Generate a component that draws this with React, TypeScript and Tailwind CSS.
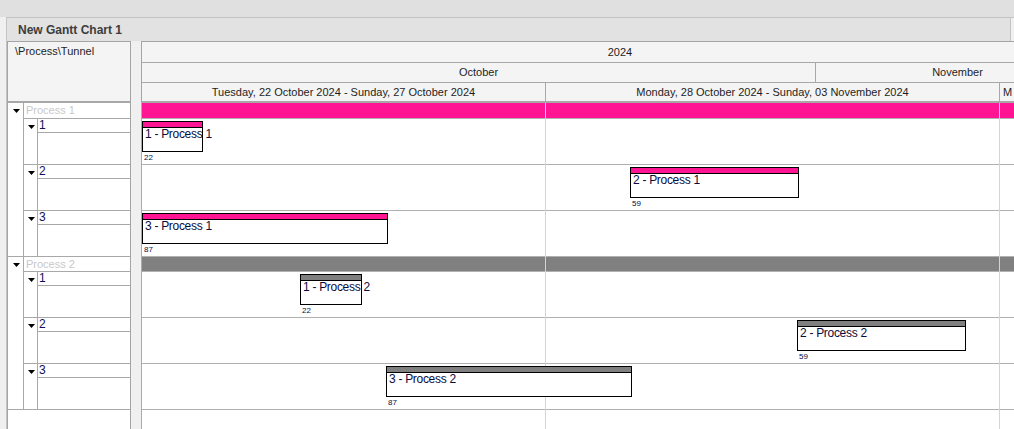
import React from 'react';

type Task = { id: string; label: string; left: number; width: number; num: number };
type Group = { name: string; fill: string; head: string; tasks: Task[] };

const groups: Group[] = [
  {
    name: 'Process 1',
    fill: 'bg-[#ff1493]',
    head: 'h-[16px]',
    tasks: [
      { id: '1', label: '1 - Process 1', left: 0, width: 61, num: 22 },
      { id: '2', label: '2 - Process 1', left: 488, width: 169, num: 59 },
      { id: '3', label: '3 - Process 1', left: 0, width: 246, num: 87 },
    ],
  },
  {
    name: 'Process 2',
    fill: 'bg-[#808080]',
    head: 'h-[15px]',
    tasks: [
      { id: '1', label: '1 - Process 2', left: 158, width: 62, num: 22 },
      { id: '2', label: '2 - Process 2', left: 655, width: 169, num: 59 },
      { id: '3', label: '3 - Process 2', left: 244, width: 246, num: 87 },
    ],
  },
];

const Caret = () => (
  <svg width="7" height="4" viewBox="0 0 7 4" className="block">
    <polygon points="0,0 7,0 3.5,4" fill="#000" />
  </svg>
);

const TreeGroup = ({ group }: { group: Group }) => (
  <div className="flex border-b border-[#a8a8a8]">
    <div className="w-[15px] shrink-0 pl-[5px] pt-[6px]">
      <Caret />
    </div>
    <div className="flex-1 border-l border-[#a8a8a8]">
      <div className={`${group.head} border-b border-[#a8a8a8] pl-[2px] text-[11px] leading-[14px] text-[#c8c8c8]`}>
        {group.name}
      </div>
      {group.tasks.map((t, i) => (
        <div
          key={t.id}
          className={
            i < group.tasks.length - 1
              ? 'flex h-[46px] border-b border-[#a8a8a8]'
              : 'flex h-[45px]'
          }
        >
          <div className="w-[13px] shrink-0 pl-[4px] pt-[6px]">
            <Caret />
          </div>
          <div className="flex-1 border-l border-[#a8a8a8]">
            <div className="h-[14px] border-b border-[#a8a8a8] pl-[1px] text-[12px] leading-[13px] text-[#10105a]">
              {t.id}
            </div>
          </div>
        </div>
      ))}
    </div>
  </div>
);

const ChartGroup = ({ group }: { group: Group }) => (
  <>
    <div className={`${group.head} border-b border-[#b0b0b0] ${group.fill}`} />
    {group.tasks.map((t) => (
      <div key={t.id} className="relative h-[46px] border-b border-[#b0b0b0]">
        <div className="absolute top-[2px] z-10" style={{ left: t.left, width: t.width }}>
          <div className="flex h-[31px] flex-col border border-black bg-white">
            <div className={`h-[6px] shrink-0 border-b border-black ${group.fill}`} />
            <div className="whitespace-nowrap pl-[2px] text-[12px] leading-[13px] tracking-[-0.3px] text-[#0b0b3b]">
              {t.label}
            </div>
          </div>
          <div className="mt-[1px] pl-[2px] text-[8px] leading-[9px] text-[#0b0b3b]">{t.num}</div>
        </div>
      </div>
    ))}
  </>
);

export default function App() {
  return (
    <div className="flex h-[429px] w-[1014px] flex-col overflow-hidden bg-[#f0f0f0] font-['Liberation_Sans',Arial,sans-serif]">
      <div className="h-[17px] shrink-0 bg-[#e0e0e0]" />
      <div className="ml-[6px] flex min-h-0 flex-1 flex-col border-l border-t border-[#c4c4c4]">
        <div className="mr-[3px] flex h-[23px] shrink-0 items-center border-r border-[#c4c4c4] bg-[#e2e2e2] pl-[11px] text-[12px] font-bold text-[#3c3c3c]">
          New Gantt Chart 1
        </div>
        <div className="flex min-h-0 flex-1">
          {/* tree */}
          <div className="flex w-[124px] shrink-0 flex-col border-x border-t border-[#a4a4a4] bg-white">
            <div className="h-[61px] shrink-0 border-b-2 border-[#a8a8a8] bg-[#f4f4f4] pl-[7px] pt-[2px] text-[11px] leading-[14px] text-[#1e1e1e]">
              \Process\Tunnel
            </div>
            {groups.map((g) => (
              <TreeGroup key={g.name} group={g} />
            ))}
          </div>

          <div className="w-[10px] shrink-0" />

          {/* chart */}
          <div className="flex min-w-0 flex-1 flex-col overflow-hidden">
            <div className="shrink-0 border-l border-t border-[#a4a4a4] bg-[#f4f4f4] text-[11px] text-[#1e1e1e]">
              <div className="flex h-[21px] whitespace-nowrap border-b border-[#a8a8a8]">
                <div className="w-[956px] shrink-0 text-center leading-[20px]">2024</div>
              </div>
              <div className="flex h-[20px] whitespace-nowrap border-b border-[#a8a8a8]">
                <div className="w-[674px] shrink-0 border-r border-[#a8a8a8] text-center leading-[19px]">
                  October
                </div>
                <div className="w-[283px] shrink-0 text-center leading-[19px]">November</div>
              </div>
              <div className="flex h-[20px] whitespace-nowrap border-b-2 border-[#a8a8a8]">
                <div className="w-[404px] shrink-0 border-r border-[#a8a8a8] text-center leading-[18px]">
                  Tuesday, 22 October 2024 - Sunday, 27 October 2024
                </div>
                <div className="w-[454px] shrink-0 border-r border-[#a8a8a8] text-center leading-[18px]">
                  Monday, 28 October 2024 - Sunday, 03 November 2024
                </div>
                <div className="w-[14px] shrink-0 pl-[3px] leading-[18px]">M</div>
              </div>
            </div>
            <div className="relative flex-1 border-l border-[#a0a0ff] bg-white">
              {groups.map((g) => (
                <ChartGroup key={g.name} group={g} />
              ))}
              <div className="absolute bottom-0 left-[403px] top-0 w-px bg-[#d4d4d4]" />
              <div className="absolute bottom-0 left-[857px] top-0 w-px bg-[#d4d4d4]" />
            </div>
          </div>
        </div>
      </div>
    </div>
  );
}
